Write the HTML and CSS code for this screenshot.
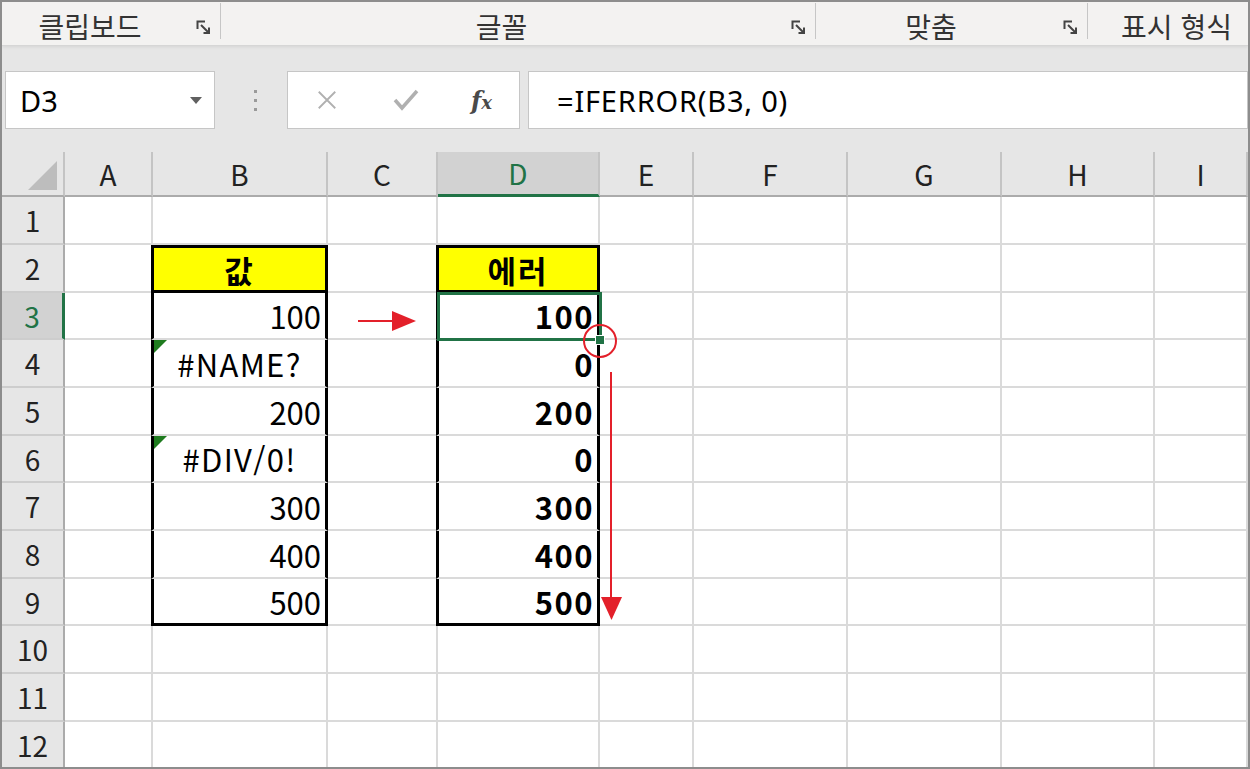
FILE: index.html
```html
<!DOCTYPE html>
<html lang="ko">
<head>
    <meta charset="UTF-8">
    <title>IFERROR 채우기</title>
    <link rel="stylesheet" href="styles.css">
</head>
<body>
    <div class="window">
        <div class="ribbon">
            <div class="group clip">
                <span class="label">클립보드</span>
                <svg class="launcher" viewBox="0 0 16 16"><path d="M1.5 9V1.5H9M5 5l8 8M13 7.5V13H7.5"/></svg>
            </div>
            <div class="group font">
                <span class="label">글꼴</span>
                <svg class="launcher" viewBox="0 0 16 16"><path d="M1.5 9V1.5H9M5 5l8 8M13 7.5V13H7.5"/></svg>
            </div>
            <div class="group align">
                <span class="label">맞춤</span>
                <svg class="launcher" viewBox="0 0 16 16"><path d="M1.5 9V1.5H9M5 5l8 8M13 7.5V13H7.5"/></svg>
            </div>
            <div class="group number">
                <span class="label">표시 형식</span>
            </div>
        </div>

        <div class="formula-area">
            <div class="namebox">
                <span>D3</span>
                <span class="caret"></span>
            </div>
            <div class="grip"><i></i><i></i><i></i></div>
            <div class="fnbox">
                <svg class="icon cancel" viewBox="0 0 24 24"><path d="M3 3l18 18M21 3L3 21"/></svg>
                <svg class="icon enter" viewBox="0 0 26 24"><path d="M2 12l7 8L24 3"/></svg>
                <span class="fx">f<small>x</small></span>
            </div>
            <div class="formula">=IFERROR(B3, 0)</div>
        </div>

        <div class="sheet">
            <div class="row head">
                <div class="corner"></div>
                <div class="ch">A</div><div class="ch">B</div><div class="ch">C</div><div class="ch on">D</div>
                <div class="ch">E</div><div class="ch">F</div><div class="ch">G</div><div class="ch">H</div><div class="ch">I</div>
            </div>
            <div class="row">
                <div class="rh">1</div>
                <div class="c"></div><div class="c"></div><div class="c"></div><div class="c"></div>
                <div class="c"></div><div class="c"></div><div class="c"></div><div class="c"></div><div class="c"></div>
            </div>
            <div class="row">
                <div class="rh">2</div>
                <div class="c"></div><div class="c box box-head">값</div><div class="c"></div><div class="c box box-head">에러</div>
                <div class="c"></div><div class="c"></div><div class="c"></div><div class="c"></div><div class="c"></div>
            </div>
            <div class="row">
                <div class="rh on">3</div>
                <div class="c"></div><div class="c box val">100</div><div class="c"></div>
                <div class="c box val strong">100<div class="selection"><span class="handle"></span></div></div>
                <div class="c"></div><div class="c"></div><div class="c"></div><div class="c"></div><div class="c"></div>
            </div>
            <div class="row">
                <div class="rh">4</div>
                <div class="c"></div><div class="c box error">#NAME?</div><div class="c"></div><div class="c box val strong">0</div>
                <div class="c"></div><div class="c"></div><div class="c"></div><div class="c"></div><div class="c"></div>
            </div>
            <div class="row">
                <div class="rh">5</div>
                <div class="c"></div><div class="c box val">200</div><div class="c"></div><div class="c box val strong">200</div>
                <div class="c"></div><div class="c"></div><div class="c"></div><div class="c"></div><div class="c"></div>
            </div>
            <div class="row">
                <div class="rh">6</div>
                <div class="c"></div><div class="c box error">#DIV/0!</div><div class="c"></div><div class="c box val strong">0</div>
                <div class="c"></div><div class="c"></div><div class="c"></div><div class="c"></div><div class="c"></div>
            </div>
            <div class="row">
                <div class="rh">7</div>
                <div class="c"></div><div class="c box val">300</div><div class="c"></div><div class="c box val strong">300</div>
                <div class="c"></div><div class="c"></div><div class="c"></div><div class="c"></div><div class="c"></div>
            </div>
            <div class="row">
                <div class="rh">8</div>
                <div class="c"></div><div class="c box val">400</div><div class="c"></div><div class="c box val strong">400</div>
                <div class="c"></div><div class="c"></div><div class="c"></div><div class="c"></div><div class="c"></div>
            </div>
            <div class="row">
                <div class="rh">9</div>
                <div class="c"></div><div class="c box box-end val">500</div><div class="c"></div><div class="c box box-end val strong">500</div>
                <div class="c"></div><div class="c"></div><div class="c"></div><div class="c"></div><div class="c"></div>
            </div>
            <div class="row">
                <div class="rh">10</div>
                <div class="c"></div><div class="c"></div><div class="c"></div><div class="c"></div>
                <div class="c"></div><div class="c"></div><div class="c"></div><div class="c"></div><div class="c"></div>
            </div>
            <div class="row">
                <div class="rh">11</div>
                <div class="c"></div><div class="c"></div><div class="c"></div><div class="c"></div>
                <div class="c"></div><div class="c"></div><div class="c"></div><div class="c"></div><div class="c"></div>
            </div>
            <div class="row">
                <div class="rh">12</div>
                <div class="c"></div><div class="c"></div><div class="c"></div><div class="c"></div>
                <div class="c"></div><div class="c"></div><div class="c"></div><div class="c"></div><div class="c"></div>
            </div>

            <!-- annotation arrows drawn over the grid -->
            <svg class="notes" viewBox="0 0 1246 615">
                <line x1="356" y1="169" x2="394" y2="169"/>
                <polygon points="390,159 414,169 390,179"/>
                <circle cx="598" cy="189" r="16"/>
                <line x1="609" y1="220" x2="609" y2="448"/>
                <polygon points="599,445 620,445 609.5,468"/>
            </svg>
        </div>
    </div>
</body>
</html>
```

FILE: styles.css
```css
* {
    box-sizing: border-box;
}

body {
    margin: 0;
    background-color: #fff;
    font-family: "Noto Sans CJK KR", "Noto Sans", sans-serif;
    color: #000;
}

.window {
    width: 1250px;
    height: 769px;
    border: 2px solid #8d8d8d;
    overflow: hidden;
    background-color: #e6e6e6;
}

/* ribbon group captions */
.ribbon {
    display: flex;
    height: 44px;
    background-color: #f3f2f1;
    border-bottom: 1px solid #d6d6d6;
    box-shadow: 0 1px 3px rgba(0,0,0,0.08);
}

.group {
    position: relative;
    display: flex;
    align-items: center;
    padding-right: 8px;
}

.group + .group::before {
    content: "";
    position: absolute;
    left: 0;
    top: 1px;
    height: 36px;
    width: 1px;
    background-color: #c6c6c6;
}

.group.clip { width: 218px; }
.group.font { width: 595px; }
.group.align { width: 272px; }
.group.number { flex: 1; }

.label {
    flex: 1;
    text-align: center;
    font-size: 28px;
    line-height: 1;
    color: #333;
    padding-top: 4px;
}

.clip .label { padding-right: 18px; }
.font .label { padding-right: 8px; }
.align .label { padding-right: 16px; }
.number .label { padding-left: 26px; }

.launcher {
    width: 16px;
    height: 16px;
    margin-top: 8px;
    fill: none;
    stroke: #444;
    stroke-width: 2;
}

/* name box + formula bar */
.formula-area {
    display: flex;
    align-items: flex-start;
    height: 106px;
    padding: 25px 0 0 3px;
}

.namebox, .fnbox, .formula {
    height: 58px;
    background-color: #fff;
    border: 1px solid #c6c6c6;
    display: flex;
    align-items: center;
}

.namebox {
    width: 210px;
    padding: 0 12px 0 14px;
    font-family: "Noto Sans", sans-serif;
    font-size: 29px;
}

.caret {
    margin-left: auto;
    border-left: 6px solid transparent;
    border-right: 6px solid transparent;
    border-top: 7px solid #606060;
}

.grip {
    width: 72px;
    height: 58px;
    display: flex;
    flex-direction: column;
    align-items: center;
    justify-content: center;
    gap: 6px;
    padding-left: 8px;
}

.grip i {
    width: 3px;
    height: 3px;
    background-color: #9a9a9a;
}

.fnbox {
    width: 233px;
    padding-left: 28px;
}

.icon {
    fill: none;
    stroke: #b0b0b0;
}

.cancel {
    width: 22px;
    height: 22px;
    stroke-width: 2;
}

.enter {
    width: 26px;
    height: 24px;
    margin-left: 55px;
    stroke-width: 3.5;
}

.fx {
    margin-left: 52px;
    font-family: "DejaVu Serif", serif;
    font-style: italic;
    font-weight: bold;
    font-size: 24px;
    color: #4a4a4a;
}

.fx small {
    font-size: 18px;
}

.formula {
    flex: 1;
    margin-left: 8px;
    padding-left: 28px;
    font-family: "Noto Sans", sans-serif;
    font-size: 29px;
    letter-spacing: 0.8px;
}

/* grid */
.sheet {
    position: relative;
    background-color: #fff;
}

.row {
    display: grid;
    grid-template-columns: 63px 88px 175px 110px 162px 94px 154px 154px 153px 1fr;
    height: 48px;
}

.row:nth-child(3n+4) {
    height: 47px;
}

.row.head {
    height: 45px;
    background-color: #e6e6e6;
}

.corner {
    position: relative;
    border-right: 2px solid #c4c4c4;
    border-bottom: 2px solid #ababab;
}

.corner::after {
    content: "";
    position: absolute;
    right: 6px;
    bottom: 5px;
    border-left: 29px solid transparent;
    border-bottom: 29px solid #bdbdbd;
}

.ch, .rh {
    display: flex;
    align-items: center;
    justify-content: center;
    font-size: 28px;
    line-height: 1;
    color: #222;
}

.ch {
    border-right: 2px solid #c4c4c4;
    border-bottom: 2px solid #ababab;
}

.rh {
    background-color: #e6e6e6;
    border-right: 2px solid #ababab;
    border-bottom: 2px solid #cdcdcd;
}

.ch.on, .rh.on {
    background-color: #d2d2d2;
    color: #217346;
}

.ch.on {
    border-bottom: 3px solid #217346;
}

.rh.on {
    border-right: 3px solid #217346;
}

.c {
    position: relative;
    display: flex;
    align-items: center;
    padding: 0 4px;
    border-right: 2px solid #dadada;
    border-bottom: 2px solid #dadada;
    font-size: 31px;
    line-height: 1;
}

.box {
    margin-left: -2px;
    border-left: 3px solid #000;
    border-right: 3px solid #000;
}

.box-head {
    justify-content: center;
    background-color: #ffff00;
    border-top: 3px solid #000;
    border-bottom: 3px solid #000;
    font-weight: bold;
    letter-spacing: 2px;
}

.box-end {
    border-bottom: 3px solid #000;
}

.val {
    justify-content: flex-end;
}

.strong {
    font-weight: bold;
    letter-spacing: 1.5px;
    padding-right: 3px;
}

.error {
    justify-content: center;
    letter-spacing: 1.3px;
}

.error::before {
    content: "";
    position: absolute;
    left: 0;
    top: 0;
    border-top: 13px solid #1e7b1e;
    border-right: 13px solid transparent;
}

.selection {
    position: absolute;
    z-index: 2;
    left: -2px;
    top: -1px;
    right: -5px;
    bottom: -3px;
    border: 3px solid #217346;
}

.handle {
    position: absolute;
    right: -6px;
    bottom: -7px;
    width: 10px;
    height: 10px;
    background-color: #217346;
    border: 1px solid #fff;
}

.notes {
    position: absolute;
    z-index: 3;
    left: 0;
    top: 0;
    width: 1246px;
    height: 615px;
    pointer-events: none;
}

.notes line {
    stroke: #e3202a;
    stroke-width: 2;
}

.notes polygon {
    fill: #e3202a;
}

.notes circle {
    fill: none;
    stroke: #e3202a;
    stroke-width: 2;
}
```
